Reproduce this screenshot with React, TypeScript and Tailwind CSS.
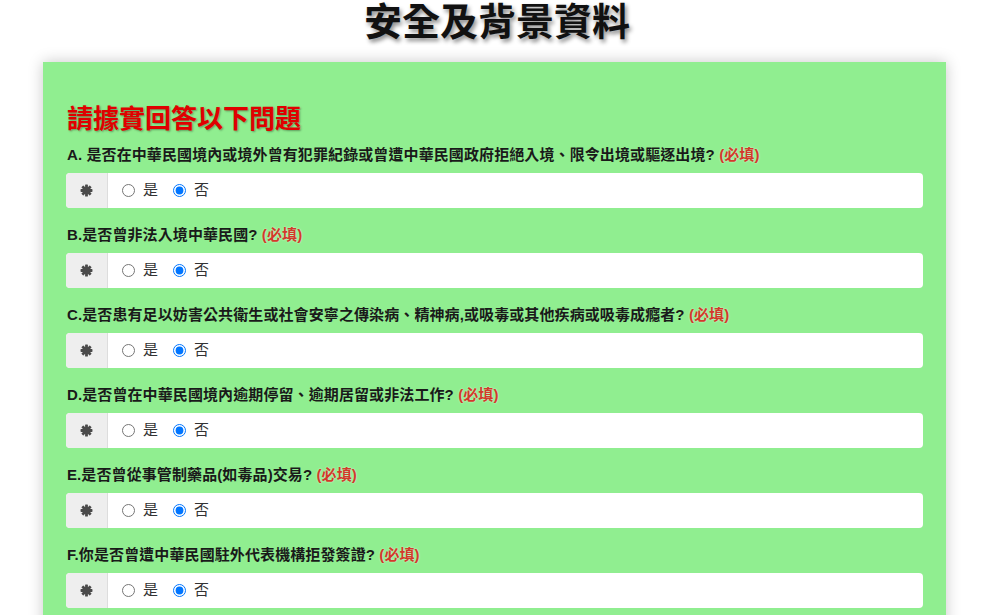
import React from "react";

const questions = [
  "A. 是否在中華民國境內或境外曾有犯罪紀錄或曾遭中華民國政府拒絕入境、限令出境或驅逐出境?",
  "B.是否曾非法入境中華民國?",
  "C.是否患有足以妨害公共衛生或社會安寧之傳染病、精神病,或吸毒或其他疾病或吸毒成癮者?",
  "D.是否曾在中華民國境內逾期停留、逾期居留或非法工作?",
  "E.是否曾從事管制藥品(如毒品)交易?",
  "F.你是否曾遭中華民國駐外代表機構拒發簽證?",
];

function Asterisk() {
  return (
    <svg width="13" height="13" viewBox="0 0 24 24" fill="#4a4a4a">
      <g transform="translate(12 12)">
        <rect x="-2.6" y="-11" width="5.2" height="22" rx="1" />
        <rect x="-2.6" y="-11" width="5.2" height="22" rx="1" transform="rotate(45)" />
        <rect x="-2.6" y="-11" width="5.2" height="22" rx="1" transform="rotate(90)" />
        <rect x="-2.6" y="-11" width="5.2" height="22" rx="1" transform="rotate(135)" />
        <circle r="6.5" />
      </g>
    </svg>
  );
}

export default function App() {
  return (
    <div
      className="min-h-[615px] bg-white overflow-hidden"
      style={{ fontFamily: '"Liberation Sans", "Noto Sans CJK TC", sans-serif' }}
    >
      <h1 className="m-0 text-center text-[38px] leading-[44px] font-bold text-[#111] [text-shadow:2px_3px_4px_rgba(0,0,0,0.45)] mb-[18px] pr-[6px]">
        安全及背景資料
      </h1>
      <div className="ml-[43px] w-[903px] bg-[#90ee90] shadow-[0_0_14px_rgba(0,0,0,0.22)] px-[23px] pt-[42px] pb-[40px]">
        <h2 className="m-0 text-[26px] leading-[30px] font-bold text-[#e00000] [text-shadow:1px_1px_2px_rgba(0,0,0,0.35)] pl-[1px]">
          請據實回答以下問題
        </h2>
        <div className="mt-[11px]">
          {questions.map((q, i) => (
            <div key={i} className="mb-[17px]">
              <div className="text-[15px] leading-[20px] font-bold text-[#1a1a1a] pl-[1px] tracking-[0.1px]">
                {q}{" "}
                <span className="text-[#d23a2a] [text-shadow:0_0_2px_rgba(255,255,255,0.7)]">(必填)</span>
              </div>
              <div className="mt-[8px] flex h-[35px] rounded-[4px] bg-white overflow-hidden">
                <div className="w-[42px] flex items-center justify-center bg-[#eeeeee] border-r border-[#dddddd]">
                  <Asterisk />
                </div>
                <label className="flex items-center pl-[14px] text-[15px] text-[#333]">
                  <input type="radio" name={`q${i}`} className="m-0 w-[13px] h-[13px]" />
                  <span className="ml-[8px]">是</span>
                </label>
                <label className="flex items-center pl-[15px] text-[15px] text-[#333]">
                  <input type="radio" name={`q${i}`} defaultChecked className="m-0 w-[13px] h-[13px]" />
                  <span className="ml-[8px]">否</span>
                </label>
              </div>
            </div>
          ))}
        </div>
      </div>
    </div>
  );
}
